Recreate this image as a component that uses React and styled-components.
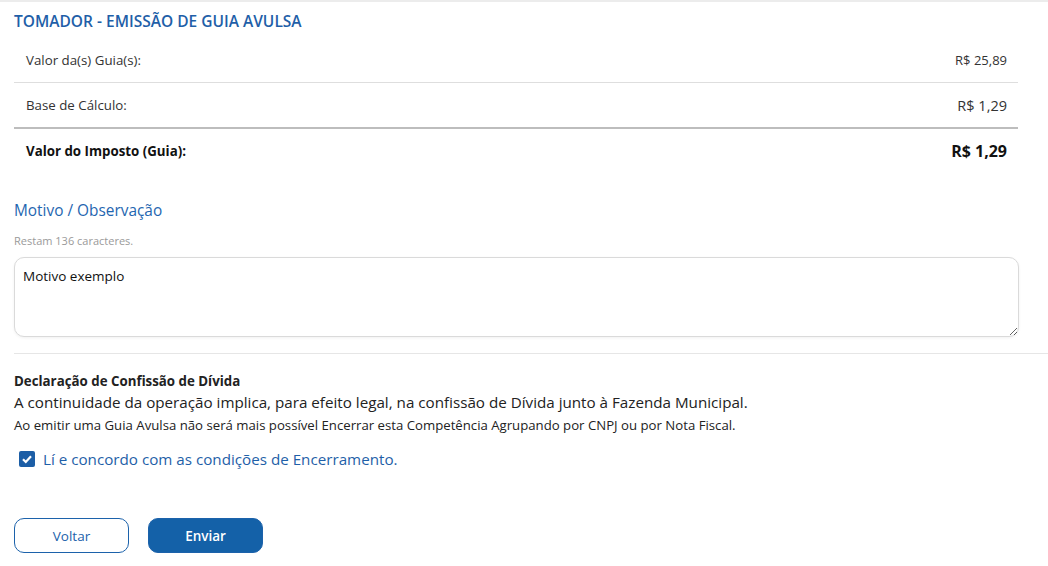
import React, { useState } from 'react';
import styled, { createGlobalStyle } from 'styled-components';

const GlobalStyle = createGlobalStyle`
  html, body {
    margin: 0;
    padding: 0;
    background: #fff;
    font-family: "Open Sans", "Noto Sans", sans-serif;
    color: #222;
  }
`;

const Page = styled.div`
  border-top: 2px solid #ececec;
  padding: 7px 0 0 14px;
`;

const Title = styled.h2`
  margin: 0;
  font-size: 15.5px;
  font-weight: 600;
  color: #1f5fa8;
  line-height: 24px;
`;

const Summary = styled.div`
  width: 1004px;
  margin-top: 5px;
`;

const Row = styled.div`
  display: flex;
  justify-content: space-between;
  align-items: center;
  height: 44px;
  padding: 0 11px 0 12px;
  border-bottom: ${p => p.$thick ? '2px solid #bdbdbd' : p.$total ? 'none' : '1px solid #dedede'};
  font-size: 13.3px;
  font-weight: ${p => (p.$total ? 700 : 400)};
  color: ${p => (p.$total ? '#111' : '#333')};
`;

const Value = styled.span`
  font-size: ${p => p.$size || 13}px;
`;

const SectionLabel = styled.div`
  margin-top: 27px;
  font-size: 15.4px;
  color: #1f66b0;
  line-height: 22px;
`;

const Counter = styled.div`
  margin-top: 12px;
  font-size: 11px;
  color: #9a9a9a;
  line-height: 14px;
`;

const TextArea = styled.textarea`
  display: block;
  box-sizing: border-box;
  width: 1005px;
  height: 80px;
  margin-top: 9px;
  padding: 9px 8px;
  border: 1px solid #dadada;
  border-radius: 10px;
  box-shadow: 0 1px 3px rgba(0, 0, 0, 0.06);
  font-family: inherit;
  font-size: 13.5px;
  color: #111;
  outline: none;
  resize: vertical;
`;

const Divider = styled.hr`
  margin: 16px 0 0;
  border: none;
  border-top: 1px solid #e6e6e6;
`;

const Declaration = styled.div`
  margin-top: 18px;
`;

const DeclTitle = styled.div`
  font-size: 13.3px;
  font-weight: 700;
  color: #222;
  line-height: 19px;
`;

const DeclText = styled.div`
  font-size: ${p => p.$size}px;
  line-height: ${p => p.$lh}px;
  color: #222;
`;

const CheckLabel = styled.label`
  display: flex;
  align-items: center;
  gap: 8px;
  margin-top: 13px;
  margin-left: 5px;
  font-size: 15.2px;
  color: #1f5fa8;
  cursor: pointer;
`;

const Box = styled.span`
  width: 16px;
  height: 16px;
  border-radius: 2px;
  background: #1c5ea6;
  display: flex;
  align-items: center;
  justify-content: center;
`;

const Actions = styled.div`
  display: flex;
  gap: 19px;
  margin-top: 49px;
`;

const Button = styled.button`
  width: 115px;
  height: 35px;
  border-radius: 10px;
  border: 1px solid #1c62ab;
  background: ${p => (p.$primary ? '#1461a8' : '#fff')};
  color: ${p => (p.$primary ? '#fff' : '#1c62ab')};
  font-family: inherit;
  font-size: 13.5px;
  font-weight: ${p => (p.$primary ? 600 : 400)};
  cursor: pointer;
`;

export default function App() {
  const [text, setText] = useState('Motivo exemplo');
  const [agreed, setAgreed] = useState(true);

  return (
    <Page>
      <GlobalStyle />
      <Title>TOMADOR - EMISSÃO DE GUIA AVULSA</Title>
      <Summary>
        <Row>
          <span>Valor da(s) Guia(s):</span>
          <Value>R$ 25,89</Value>
        </Row>
        <Row $thick>
          <span>Base de Cálculo:</span>
          <Value $size={14.5}>R$ 1,29</Value>
        </Row>
        <Row $total>
          <span>Valor do Imposto (Guia):</span>
          <Value $size={16}>R$ 1,29</Value>
        </Row>
      </Summary>

      <SectionLabel>Motivo / Observação</SectionLabel>
      <Counter>Restam {150 - text.length} caracteres.</Counter>
      <TextArea value={text} maxLength={150} onChange={e => setText(e.target.value)} />

      <Divider />

      <Declaration>
        <DeclTitle>Declaração de Confissão de Dívida</DeclTitle>
        <DeclText $size={15.2} $lh={23}>
          A continuidade da operação implica, para efeito legal, na confissão de Dívida junto à Fazenda Municipal.
        </DeclText>
        <DeclText $size={13.2} $lh={22}>
          Ao emitir uma Guia Avulsa não será mais possível Encerrar esta Competência Agrupando por CNPJ ou por Nota Fiscal.
        </DeclText>
        <CheckLabel onClick={() => setAgreed(!agreed)}>
          <Box>
            {agreed && (
              <svg width="12" height="12" viewBox="0 0 12 12">
                <path d="M2 6.2 L4.8 9 L10 3.2" fill="none" stroke="#fff" strokeWidth="2.2" />
              </svg>
            )}
          </Box>
          Lí e concordo com as condições de Encerramento.
        </CheckLabel>
      </Declaration>

      <Actions>
        <Button>Voltar</Button>
        <Button $primary>Enviar</Button>
      </Actions>
    </Page>
  );
}
